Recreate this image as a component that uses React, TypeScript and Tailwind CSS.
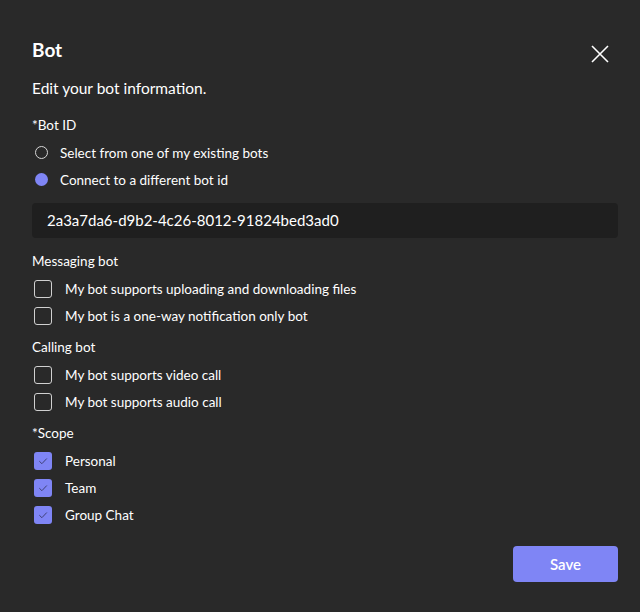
import React from 'react';

const font = { fontFamily: 'Lato, "Noto Sans", sans-serif' };

function Radio({ checked, label }: { checked?: boolean; label: string }) {
    return (
        <div className="flex h-[27px] items-center">
            {checked ? (
                <span className="ml-[3px] h-[13px] w-[13px] rounded-full bg-[#7f85f5]" />
            ) : (
                <span className="ml-[3px] h-[13px] w-[13px] rounded-full border border-[#d6d6d6]" />
            )}
            <span className="ml-[12px] pt-[2px] text-[13.5px] text-white">{label}</span>
        </div>
    );
}

function Check({ checked, label }: { checked?: boolean; label: string }) {
    return (
        <div className="flex h-[27px] items-center">
            {checked ? (
                <span className="ml-[2px] flex h-[18px] w-[18px] items-center justify-center rounded-[3px] bg-[#7f85f5]">
                    <svg width="12" height="12" viewBox="0 0 12 12" fill="none">
                        <path d="M2.3 6.2 L4.9 8.7 L9.8 3.5" stroke="#3f4178" strokeWidth="1" />
                    </svg>
                </span>
            ) : (
                <span className="ml-[2px] h-[18px] w-[18px] rounded-[3px] border border-[#d0d0d0]" />
            )}
            <span className="ml-[13px] pt-[2px] text-[13.5px] text-white">{label}</span>
        </div>
    );
}

export default function App() {
    return (
        <div className="h-[612px] w-[640px] bg-[#292929] pl-[32px] pr-[22px] pt-[38px]" style={font}>
            {/* Header */}
            <div className="flex h-[24px] items-center justify-between">
                <h1 className="text-[19px] font-bold leading-[24px] text-white">Bot</h1>
                <button className="mr-[9px] mt-[8px] text-white">
                    <svg width="18" height="18" viewBox="0 0 18 18" fill="none">
                        <path d="M1 1 L17 17 M17 1 L1 17" stroke="#ffffff" strokeWidth="1.6" />
                    </svg>
                </button>
            </div>

            <p className="mt-[16px] h-[20px] text-[15.5px] leading-[20px] text-white">Edit your bot information.</p>

            <div className="mt-[17px] h-[20px] text-[13.5px] leading-[20px] text-white">*Bot ID</div>
            <div className="mt-[4px]">
                <Radio label="Select from one of my existing bots" />
                <Radio checked label="Connect to a different bot id" />
            </div>

            <div className="mt-[10px] flex h-[35px] items-center rounded-[4px] bg-[#1f1f1f] px-[15px] text-[15px] text-white">
                2a3a7da6-d9b2-4c26-8012-91824bed3ad0
            </div>

            <div className="mt-[13px] h-[20px] text-[13.5px] leading-[20px] text-white">Messaging bot</div>
            <div className="mt-[4px]">
                <Check label="My bot supports uploading and downloading files" />
                <Check label="My bot is a one-way notification only bot" />
            </div>

            <div className="mt-[8px] h-[20px] text-[13.5px] leading-[20px] text-white">Calling bot</div>
            <div className="mt-[4px]">
                <Check label="My bot supports video call" />
                <Check label="My bot supports audio call" />
            </div>

            <div className="mt-[8px] h-[20px] text-[13.5px] leading-[20px] text-white">*Scope</div>
            <div className="mt-[4px]">
                <Check checked label="Personal" />
                <Check checked label="Team" />
                <Check checked label="Group Chat" />
            </div>

            <div className="mt-[18px] flex justify-end">
                <button className="h-[36px] w-[105px] rounded-[4px] bg-[#7f85f5] text-[15px] font-semibold text-white">
                    Save
                </button>
            </div>
        </div>
    );
}
